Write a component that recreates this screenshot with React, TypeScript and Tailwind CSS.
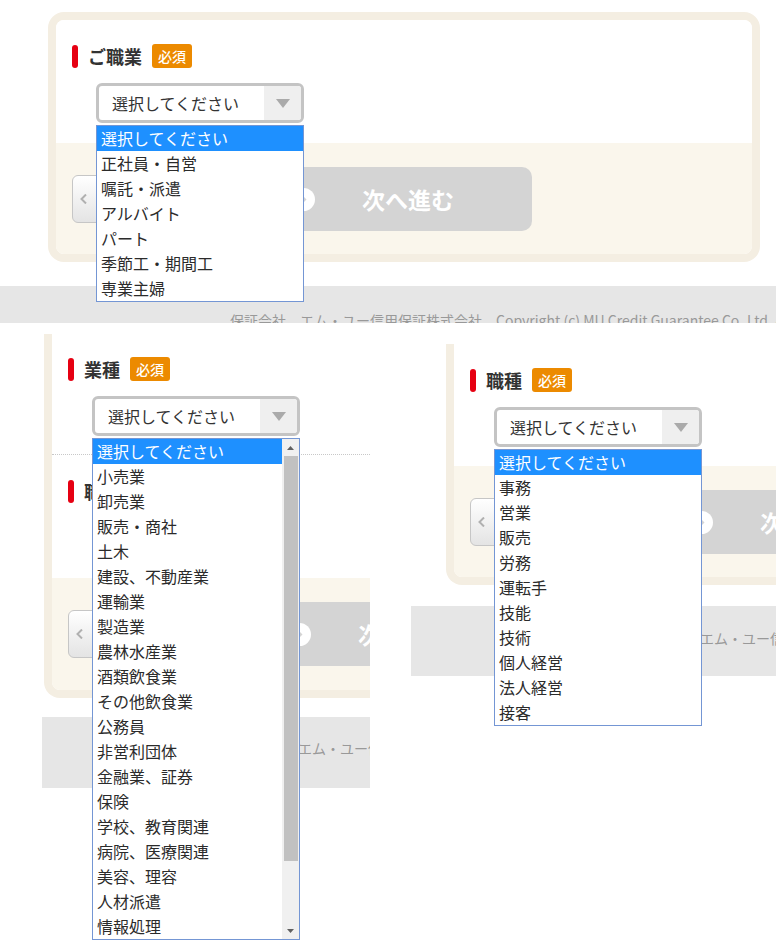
import React from "react";

const occupations = ["選択してください", "正社員・自営", "嘱託・派遣", "アルバイト", "パート", "季節工・期間工", "専業主婦"];

const industries = [
  "選択してください", "小売業", "卸売業", "販売・商社", "土木", "建設、不動産業", "運輸業", "製造業",
  "農林水産業", "酒類飲食業", "その他飲食業", "公務員", "非営利団体", "金融業、証券", "保険",
  "学校、教育関連", "病院、医療関連", "美容、理容", "人材派遣", "情報処理",
];

const jobTypes = ["選択してください", "事務", "営業", "販売", "労務", "運転手", "技能", "技術", "個人経営", "法人経営", "接客"];

const footerText = "保証会社　エム・ユー信用保証株式会社　Copyright (c) MU Credit Guarantee Co.,Ltd. All Rights Reserved.";

function RequiredLabel({ text }: { text: string }) {
  return (
    <div className="flex h-6 items-center">
      <span className="h-[23px] w-[6px] rounded-[3px] bg-[#e60012]" />
      <span className="ml-[10px] text-[18px] font-bold leading-none text-[#333]">{text}</span>
      <span className="ml-[10px] h-6 rounded-[3px] bg-[#ec8a00] px-[6px] text-[14px] font-medium leading-6 text-white">必須</span>
    </div>
  );
}

function Scrollbar() {
  return (
    <div className="flex w-[17px] flex-col items-center bg-[#f0f0f0]">
      <div className="flex h-[17px] items-center justify-center">
        <svg width="7" height="4" viewBox="0 0 7 4"><path d="M0 4L3.5 0L7 4z" fill="#606060" /></svg>
      </div>
      <div className="h-[405px] w-[14px] bg-[#c1c1c1]" />
      <div className="flex-1" />
      <div className="flex h-[17px] items-center justify-center">
        <svg width="7" height="4" viewBox="0 0 7 4"><path d="M0 0L7 0L3.5 4z" fill="#606060" /></svg>
      </div>
    </div>
  );
}

function OptionList({ options, scroll }: { options: string[]; scroll?: boolean }) {
  return (
    <div className="absolute left-0 top-[42px] z-20 flex w-[208px] border border-[#7496d4] bg-white">
      <ul className="flex-1">
        {options.map((o, i) => (
          <li
            key={o}
            className={
              i === 0
                ? "h-[25px] whitespace-nowrap bg-[#1e90ff] pl-[4px] text-[16px] leading-[25px] text-white"
                : "h-[25px] whitespace-nowrap pl-[4px] text-[16px] leading-[25px] text-[#2b2b2b]"
            }
          >
            {o}
          </li>
        ))}
      </ul>
      {scroll && <Scrollbar />}
    </div>
  );
}

function Field({ label, options, scroll }: { label: string; options?: string[]; scroll?: boolean }) {
  return (
    <div>
      <RequiredLabel text={label} />
      <div className="relative ml-6 mt-[15px] h-10 w-[208px]">
        <div className="flex h-full overflow-hidden rounded-[6px] border-[3px] border-[#c4c4c4] bg-white">
          <span className="flex-1 pl-[13px] text-[16px] leading-[34px] text-[#333]">選択してください</span>
          <span className="flex w-[37px] items-center justify-center bg-[#efefef]">
            <svg width="14" height="9" viewBox="0 0 14 9"><path d="M0 0h14L7 9z" fill="#aaa" /></svg>
          </span>
        </div>
        {options && <OptionList options={options} scroll={scroll} />}
      </div>
    </div>
  );
}

function Buttons() {
  return (
    <div className="flex items-start">
      <div className="mt-2 flex h-12 w-16 items-center rounded-[6px] border border-[#c6c6c6] bg-linear-to-b from-white to-[#e4e4e4] pl-[7px]">
        <svg width="7" height="10" viewBox="0 0 7 10"><path d="M6 0.5L1.5 5L6 9.5" fill="none" stroke="#b0b0b0" strokeWidth="2" /></svg>
      </div>
      <div className="ml-[82px] flex h-16 w-[314px] items-center rounded-[10px] bg-[#d4d4d4] pl-[74px]">
        <svg width="23" height="23" viewBox="0 0 23 23">
          <circle cx="11.5" cy="11.5" r="11.5" fill="#fff" />
          <path d="M9.5 6.5L14.5 11.5L9.5 16.5z" fill="#d4d4d4" />
        </svg>
        <span className="ml-[47px] text-[23px] font-bold leading-none text-white">次へ進む</span>
      </div>
    </div>
  );
}

export default function App() {
  return (
    <div className="h-[949px] w-[776px] overflow-hidden bg-white font-['Noto_Sans_CJK_JP','Noto_Sans',sans-serif]">
      {/* ご職業 */}
      <section className="h-[323px] overflow-hidden">
        <div className="ml-12 mt-3 w-[712px] rounded-[16px] border-8 border-[#f4eee2]">
          <div className="h-[123px] rounded-t-[8px] bg-white pl-4 pt-6">
            <Field label="ご職業" options={occupations} />
          </div>
          <div className="h-[111px] rounded-b-[8px] bg-[#faf6ec] pl-4 pt-6">
            <Buttons />
          </div>
        </div>
        <footer className="mt-6 h-[60px] whitespace-nowrap bg-[#e6e6e6] pl-[230px] pt-6 text-[14px] leading-5 text-[#999]">
          {footerText}
        </footer>
      </section>

      <div className="flex h-[626px]">
        {/* 業種 */}
        <section className="w-[370px] shrink-0 overflow-hidden pt-[11px]">
          <div className="ml-[44px] w-[712px] rounded-b-[16px] border-8 border-t-0 border-[#f4eee2]">
            <div className="h-[244px] bg-white pt-[23px]">
              <div className="pl-4">
                <Field label="業種" options={industries} scroll />
              </div>
              <div className="mt-[18px] border-t border-dotted border-[#c8c8c8]" />
              <div className="pl-4 pt-6">
                <Field label="職種" />
              </div>
            </div>
            <div className="h-[112px] rounded-b-[8px] bg-[#faf6ec] pl-4 pt-6">
              <Buttons />
            </div>
          </div>
          <footer className="ml-[42px] mt-[19px] h-[71px] whitespace-nowrap bg-[#e6e6e6] pl-[186px] pt-[21px] text-[14px] leading-5 text-[#999]">
            {footerText}
          </footer>
        </section>

        <div className="w-[41px] shrink-0" />

        {/* 職種 */}
        <section className="flex-1 overflow-hidden pt-[21px]">
          <div className="ml-[35px] w-[712px] rounded-b-[16px] border-8 border-t-0 border-[#f4eee2]">
            <div className="h-[122px] bg-white pl-4 pt-6">
              <Field label="職種" options={jobTypes} />
            </div>
            <div className="h-[111px] rounded-b-[8px] bg-[#faf6ec] pl-4 pt-6">
              <Buttons />
            </div>
          </div>
          <footer className="mt-[21px] h-[70px] whitespace-nowrap bg-[#e6e6e6] pl-[219px] pt-[22px] text-[14px] leading-5 text-[#999]">
            {footerText}
          </footer>
        </section>
      </div>
    </div>
  );
}
